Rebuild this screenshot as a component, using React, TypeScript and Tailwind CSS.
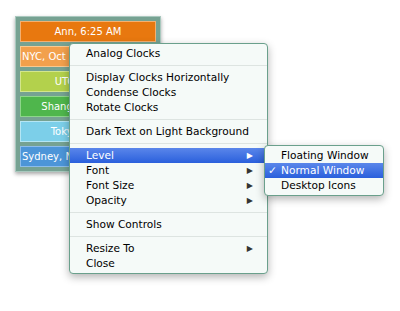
const clocks = [
  { label: "Ann, 6:25 AM", bg: "bg-[#e8780f]", border: "border-[#f4b070]" },
  { label: "NYC, Oct 24, 2013, 9:25 AM", bg: "bg-[#f2a04c]", border: "border-[#f8c990]" },
  { label: "UTC, 1:25 PM", bg: "bg-[#b3d14c]", border: "border-[#d3e68c]" },
  { label: "Shanghai, 9:25 PM", bg: "bg-[#4fb64c]", border: "border-[#8dd68a]" },
  { label: "Tokyo, 9:25 PM", bg: "bg-[#7ccfe9]", border: "border-[#b4e6f4]" },
  { label: "Sydney, Nov 1, 2013, 12:25 AM", bg: "bg-[#4c95d8]", border: "border-[#8cbcea]" },
];

type Item = { label: string; sub?: boolean; active?: boolean } | "sep";

const items: Item[] = [
  { label: "Analog Clocks" },
  "sep",
  { label: "Display Clocks Horizontally" },
  { label: "Condense Clocks" },
  { label: "Rotate Clocks" },
  "sep",
  { label: "Dark Text on Light Background" },
  "sep",
  { label: "Level", sub: true, active: true },
  { label: "Font", sub: true },
  { label: "Font Size", sub: true },
  { label: "Opacity", sub: true },
  "sep",
  { label: "Show Controls" },
  "sep",
  { label: "Resize To", sub: true },
  { label: "Close" },
];

const font = { fontFamily: "'DejaVu Sans', 'Lucida Grande', sans-serif" };

export default function App() {
  return (
    <div className="relative w-[400px] h-[311px] bg-white overflow-hidden text-[10.6px]" style={font}>
      {/* clock panel */}
      <div className="absolute left-[15px] top-[16px] w-[146px] p-[4px] bg-[#76a292] border border-[#a9c8be] shadow-[0_2px_4px_rgba(0,0,0,0.35)] flex flex-col gap-[4px]">
        {clocks.map((c) => (
          <div
            key={c.label}
            className={`h-[21px] ${c.bg} border ${c.border} text-white text-[10px] leading-[19px] px-[1px] text-center whitespace-nowrap overflow-hidden`}
          >
            {c.label}
          </div>
        ))}
      </div>

      {/* context menu */}
      <div className="absolute left-[69px] top-[43px] w-[199px] py-[2px] bg-[#f5faf8] border border-[#6aa08c] rounded-[4px] shadow-[0_3px_8px_rgba(0,0,0,0.3)] text-black">
        {items.map((it, i) =>
          it === "sep" ? (
            <div key={i} className="h-[9px] flex items-center">
              <div className="h-px w-full bg-[#dde4e1]" />
            </div>
          ) : (
            <div
              key={i}
              className={`h-[15px] pl-[16px] pr-[14px] flex items-center justify-between leading-none whitespace-nowrap ${
                it.active ? "bg-gradient-to-b from-[#5a86ea] to-[#2a5fdc] text-white" : ""
              }`}
            >
              <span>{it.label}</span>
              {it.sub && <span className={`text-[8px] ${it.active ? "text-white" : "text-[#333]"}`}>▶</span>}
            </div>
          )
        )}
      </div>

      {/* submenu */}
      <div className="absolute left-[264px] top-[145px] w-[120px] py-[2px] bg-[#f5faf8] border border-[#6aa08c] rounded-[4px] shadow-[0_3px_8px_rgba(0,0,0,0.3)] text-black">
        <div className="h-[15px] pl-[16px] flex items-center leading-none whitespace-nowrap">Floating Window</div>
        <div className="h-[15px] pl-[3px] flex items-center leading-none whitespace-nowrap bg-gradient-to-b from-[#5a86ea] to-[#2a5fdc] text-white">
          <span className="w-[13px]">✓</span>
          <span>Normal Window</span>
        </div>
        <div className="h-[15px] pl-[16px] flex items-center leading-none whitespace-nowrap">Desktop Icons</div>
      </div>
    </div>
  );
}
